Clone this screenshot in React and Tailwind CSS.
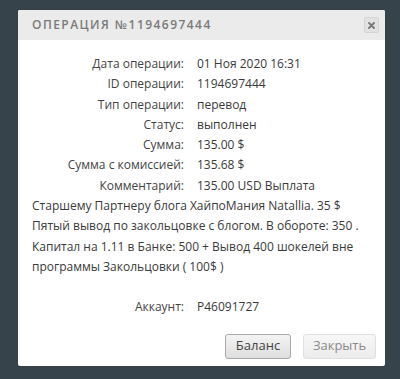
import React from "react";

const rows = [
  ["Дата операции:", "01 Ноя 2020 16:31"],
  ["ID операции:", "1194697444"],
  ["Тип операции:", "перевод"],
  ["Статус:", "выполнен"],
  ["Сумма:", "135.00 $"],
  ["Сумма с комиссией:", "135.68 $"],
];

function Label({ children }) {
  return (
    <span className="inline-block w-[152px] text-right mr-[13px] text-[#444]">{children}</span>
  );
}

export default function App() {
  return (
    <div className="w-[400px] h-[379px] bg-[#36434b] pt-[10px] pl-[18px]" style={{ fontFamily: '"Open Sans", sans-serif' }}>
      <div className="w-[367px] h-[356px] bg-white rounded-[2px] flex flex-col">
        <div className="h-[30px] bg-[#ebebeb] flex items-center justify-between pl-[14px] pr-[6px] rounded-t-[2px]">
          <span className="text-[12px] font-semibold tracking-[1.45px] text-[#7a7a7a] uppercase">Операция №1194697444</span>
          <button className="w-[15px] h-[16px] bg-[#e2e2e2] border border-[#d4d4d4] rounded-[2px] flex items-center justify-center">
            <svg width="7" height="7" viewBox="0 0 7 7">
              <path d="M1 1 L6 6 M6 1 L1 6" stroke="#777" strokeWidth="1.8" strokeLinecap="round" />
            </svg>
          </button>
        </div>
        <div className="px-[14px] pt-[14px] text-[12px] leading-[20.3px] text-[#3a3a3a]">
          {rows.map(([l, v]) => (
            <div key={l}>
              <Label>{l}</Label>
              <span>{v}</span>
            </div>
          ))}
          <div>
            <Label>Комментарий:</Label>
            135.00 USD Выплата<br />
            Старшему Партнеру блога ХайпоМания Natallia. 35 $<br />
            Пятый вывод по закольцовке с блогом. В обороте: 350 .<br />
            Капитал на 1.11 в Банке: 500 + Вывод 400 шокелей вне<br />
            программы Закольцовки ( 100$ )
          </div>
          <div className="mt-[20px]">
            <Label>Аккаунт:</Label>
            <span>P46091727</span>
          </div>
        </div>
        <div className="flex justify-end gap-[12px] pr-[9px] mt-[16px]">
          <button className="w-[66px] h-[25px] rounded-[3px] border border-[#a9a9a9] bg-gradient-to-b from-[#f4f4f4] to-[#dedede] text-[13px] text-[#444]">Баланс</button>
          <button className="w-[73px] h-[25px] rounded-[3px] border border-[#e0e0e0] bg-gradient-to-b from-[#f7f7f7] to-[#ececec] text-[13px] text-[#8a8a8a]">Закрыть</button>
        </div>
      </div>
    </div>
  );
}
